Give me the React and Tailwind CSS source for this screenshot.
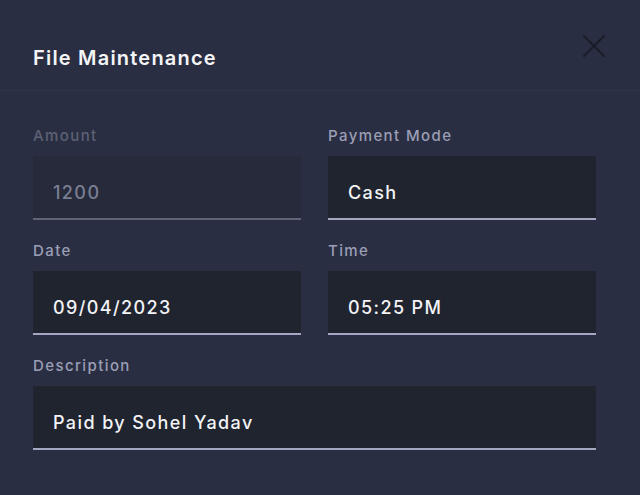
import { X } from "lucide-react";

const font = { fontFamily: "Inter, 'Noto Sans', sans-serif" };

const Field = ({ label, value, disabled, className = "" }) => {
  return (
    <div className={"flex flex-col " + className}>
      <label
        className={
          "text-[15px] font-medium h-[21px] leading-[21px] mb-[10px] tracking-[1.4px] " +
          (disabled ? "text-[#5c6176]" : "text-[#9a9eb6]")
        }
      >
        {label}
      </label>
      <div
        className={
          "h-[64px] flex items-center px-5 pt-[11px] border-b-2 " +
          (disabled
            ? "bg-[#262a3b] border-[#5f6479] text-[#7a7f92]"
            : "bg-[#20242f] border-[#a3a7c2] text-[#f2f3f6]")
        }
      >
        <span className="text-[18px] font-medium tracking-[1.4px]">{value}</span>
      </div>
    </div>
  );
};

export default function App() {
  return (
    <div className="w-[640px] h-[495px] bg-[#2a2e42] overflow-hidden" style={font}>
      {/* Header */}
      <div className="h-[91px] border-b border-[#303548] flex items-start justify-between pl-[33px] pr-[26px]">
        <h2 className="mt-[45px] text-[20px] font-semibold text-[#f4f5f7] tracking-[1.2px] leading-[26px]">
          File Maintenance
        </h2>
        <button className="mt-[26px] text-[#1a1d29]">
          <X size={40} strokeWidth={1.2} />
        </button>
      </div>
      {/* Body */}
      <div className="pl-[33px] pr-[44px] pt-[34px] flex flex-col gap-[20px]">
        <div className="grid grid-cols-2 gap-x-[27px]">
          <Field label="Amount" value="1200" disabled />
          <Field label="Payment Mode" value="Cash" />
        </div>
        <div className="grid grid-cols-2 gap-x-[27px]">
          <Field label="Date" value="09/04/2023" />
          <Field label="Time" value="05:25 PM" />
        </div>
        <Field label="Description" value="Paid by Sohel Yadav" />
      </div>
    </div>
  );
}
